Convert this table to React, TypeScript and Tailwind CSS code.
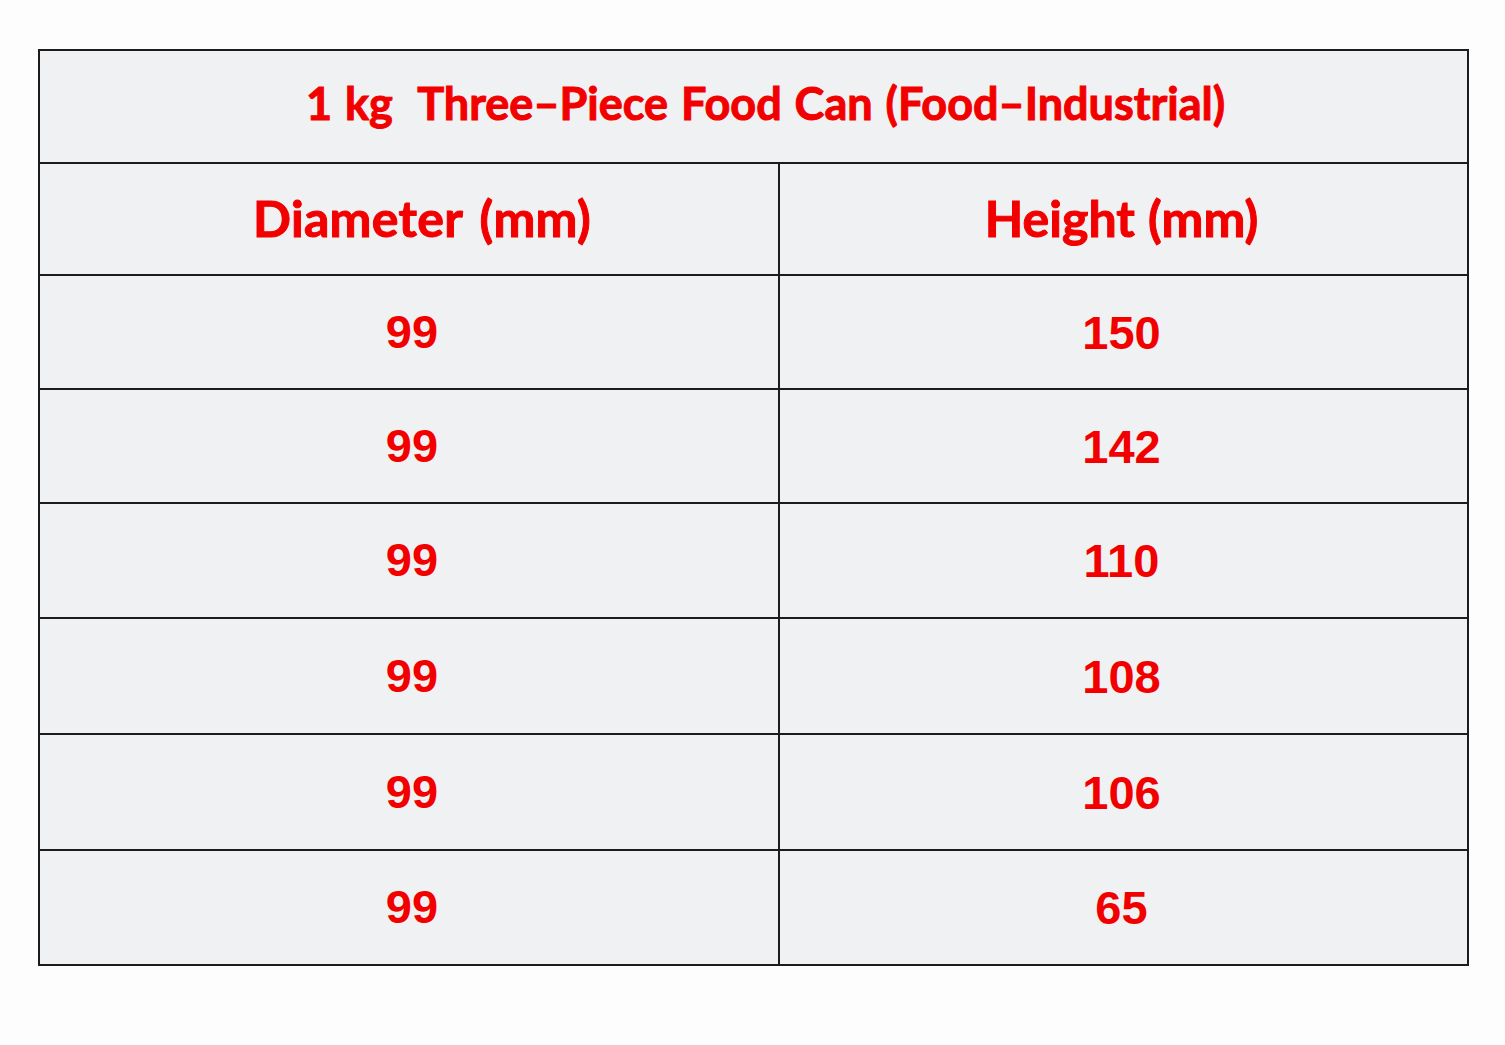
import React from "react";

const rows: [string, string, string][] = [
  ["99", "150", "h-[114px]"],
  ["99", "142", "h-[114px]"],
  ["99", "110", "h-[115px]"],
  ["99", "108", "h-[116px]"],
  ["99", "106", "h-[116px]"],
  ["99", "65", "h-[113px]"],
];

export default function App() {
  return (
    <div className="min-h-[1045px] w-full bg-[#fdfdfd] pt-[49px] pl-[38px]">
      <div className="w-[1431px] border-2 border-[#1c1c1c] bg-[#f0f1f2]">
        <div className="flex h-[113px] items-center justify-center border-b-2 border-[#1c1c1c] pl-[24px] pb-[6px]">
          <span className="font-['Lato',sans-serif] text-[45px] font-bold [word-spacing:2px] [-webkit-text-stroke:1px_#f20000] text-[#f20000]">
            1 kg&nbsp; Three–Piece Food Can (Food–Industrial)
          </span>
        </div>
        <div className="flex h-[112px] border-b-2 border-[#1c1c1c]">
          <div className="flex w-[740px] items-center justify-center border-r-2 border-[#1c1c1c] pl-[26px] pb-[2px]">
            <span className="font-['Lato',sans-serif] text-[50px] font-bold tracking-[0.3px] [word-spacing:5px] [-webkit-text-stroke:1px_#f20000] text-[#f20000]">Diameter (mm)</span>
          </div>
          <div className="flex flex-1 items-center justify-center pb-[2px] pr-[4px]">
            <span className="font-['Lato',sans-serif] text-[50px] font-bold [word-spacing:1px] [-webkit-text-stroke:1px_#f20000] text-[#f20000]">Height (mm)</span>
          </div>
        </div>
        {rows.map(([d, h, cls], i) => (
          <div
            key={i}
            className={`flex ${cls} ${i < rows.length - 1 ? "border-b-2 border-[#1c1c1c]" : ""}`}
          >
            <div className="flex w-[740px] items-center justify-center border-r-2 border-[#1c1c1c] pl-[6px]">
              <span className="font-['Liberation_Sans',Arial,sans-serif] text-[47px] font-bold text-[#f20000]">{d}</span>
            </div>
            <div className="flex flex-1 items-center justify-center pt-[2px] pr-[4px]">
              <span className="font-['Liberation_Sans',Arial,sans-serif] text-[47px] font-bold text-[#f20000]">{h}</span>
            </div>
          </div>
        ))}
      </div>
    </div>
  );
}
